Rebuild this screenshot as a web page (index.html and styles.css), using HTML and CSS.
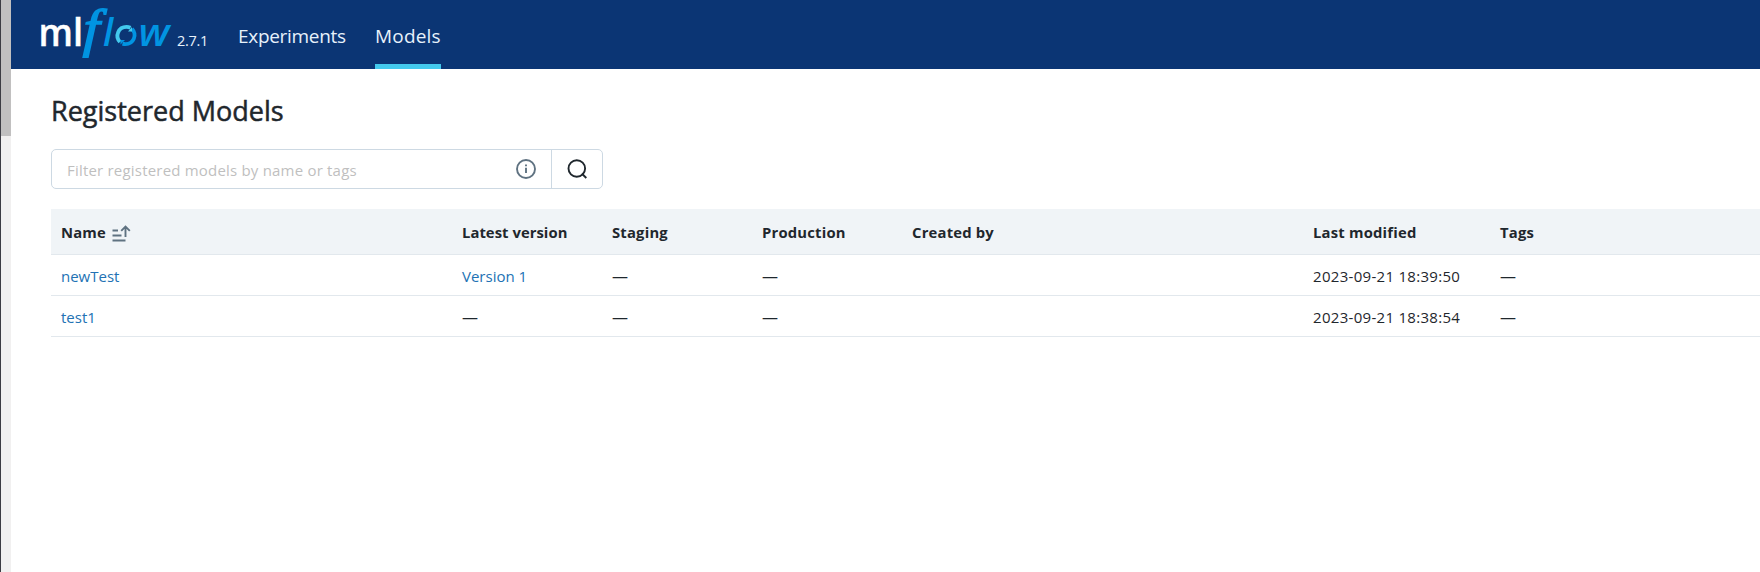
FILE: index.html
```
<!DOCTYPE html>
<html lang="en">
<head>
<meta charset="utf-8">
<title>Registered Models</title>
<link rel="stylesheet" href="styles.css">
</head>
<body>
<div class="scrollbar"><div class="thumb"></div></div>
<div class="page">
<header class="header">
  <svg class="logo" width="136" height="62" viewBox="0 0 136 62">
    <text class="logo-ml" x="-2.500" y="46" textLength="44.500" lengthAdjust="spacingAndGlyphs">ml</text>
    <text class="logo-f" transform="translate(42 46.300) skewX(-2) scale(1.080 1)">f</text>
    <text class="logo-flow" x="62" y="46">l</text>
    <g fill="none" stroke-width="3.800">
      <path stroke="#43c9ed" d="M79 42C73.500 36 77.500 26.900 85.500 26.900C87 26.900 88.200 27.200 89.500 27.800"/>
      <path stroke="#0194e2" d="M91 28.800C96.500 35 92.500 44.100 84.500 44.100C83.500 44.100 82.500 43.900 81.500 43.600"/>
    </g>
    <path fill="#43c9ed" d="M87 31.500H91V27Z"/>
    <path fill="#0194e2" d="M84 40H79.500V44.500Z"/>
    <text class="logo-flow" x="97.500" y="46" textLength="31" lengthAdjust="spacingAndGlyphs">w</text>
  </svg>
  <span class="version">2.7.1</span>
  <nav class="nav"><a class="tab exp">Experiments</a><a class="tab active">Models</a></nav>
</header>
<main class="content">
  <h1 class="title">Registered Models</h1>
  <div class="search">
    <div class="field"><span class="placeholder">Filter registered models by name or tags</span>
      <svg width="20" height="20" viewBox="0 0 20 20" fill="none" stroke="#5f7281" stroke-width="1.900"><circle cx="10" cy="10" r="9"/><path d="M10 8.700V14M10 5.600V7.300"/></svg>
    </div>
    <div class="button"><svg width="20" height="20" viewBox="0 0 20 20" fill="none" stroke="#1f272d" stroke-width="1.900"><circle cx="9.800" cy="9.500" r="8.300"/><path d="M14.800 14.500L19.300 19"/></svg></div>
  </div>
  <div class="table">
    <div class="row head">
      <div class="name-head">Name <svg width="19" height="17" viewBox="0 0 19 17" fill="none" stroke="#5f7281" stroke-width="1.900"><path d="M0.500 5.500H6M0.500 10.500H9.500M0.500 15.500H13.500M13.500 12V1.500M9.200 5.800L13.500 1.500L17.800 5.800"/></svg></div>
      <div class="latest">Latest version</div><div>Staging</div><div>Production</div><div>Created by</div><div>Last modified</div><div>Tags</div>
    </div>
    <div class="row">
      <div><a class="link">newTest</a></div><div><a class="link">Version 1</a></div><div><span class="dash">—</span></div><div><span class="dash">—</span></div><div></div><div class="date">2023-09-21 18:39:50</div><div><span class="dash">—</span></div>
    </div>
    <div class="row">
      <div><a class="link">test1</a></div><div><span class="dash">—</span></div><div><span class="dash">—</span></div><div><span class="dash">—</span></div><div></div><div class="date">2023-09-21 18:38:54</div><div><span class="dash">—</span></div>
    </div>
  </div>
</main>
</div>
</body>
</html>
```
FILE: styles.css
```
* { box-sizing: border-box; }
body { margin: 0; height: 572px; display: flex; overflow: hidden; background: #fff; color: #1f272d; font: 15px/20px "Open Sans", "Noto Sans", sans-serif; }
.scrollbar { width: 11px; flex: none; border-left: 1px solid #3c3c43; background: #f1f0f0; }
.thumb { height: 136px; background: #c1c0c0; }
.page { flex: 1; min-width: 0; }
.header { height: 69px; background: #0b3574; display: flex; padding-left: 30px; color: #e7f1fb; }
.logo { flex: none; overflow: visible; }
.logo-ml { font: 600 37px "Open Sans", sans-serif; fill: #fff; stroke: #fff; stroke-width: 0.4px; }
.logo-f { font: italic 53px "Liberation Serif", serif; fill: #0194e2; stroke: #0194e2; stroke-width: 1.6px; }
.logo-flow { font: italic 600 37px "Open Sans", sans-serif; fill: #0194e2; }
.version { width: 61px; padding-top: 31px; font-size: 14.5px; letter-spacing: -0.3px; }
.nav { display: flex; gap: 30px; }
.tab { height: 69px; padding-top: 24px; font-size: 19px; line-height: 24px; width: 66px; letter-spacing: 0.2px; white-space: nowrap; }
.exp { width: 107px; letter-spacing: -0.3px; }
.active { border-bottom: 5px solid #43c9ed; }
.content { padding: 26px 0 0 40px; }
.title { margin: 0; font-size: 27px; line-height: 32px; font-weight: 500; height: 54px; -webkit-text-stroke: 0.5px #1f272d; }
.search { display: flex; width: 552px; height: 40px; border: 1px solid #cdd9e3; border-radius: 5px; margin-bottom: 20px; }
.field { width: 499px; display: flex; align-items: center; justify-content: space-between; padding: 0 15px; }
.placeholder { color: #bfbfbf; padding-top: 2px; letter-spacing: 0.2px; }
.button { flex: 1; border-left: 1px solid #cdd9e3; display: flex; align-items: center; justify-content: center; }
.row { display: grid; grid-template-columns: 401px 150px 150px 150px 401px 187px 1fr; height: 41px; border-bottom: 1px solid #e2e8ed; align-items: center; }
.row > div { padding: 2px 0 0 10px; white-space: nowrap; }
.row.head { height: 46px; background: #f0f4f7; font-weight: 700; font-size: 14.8px; letter-spacing: 0.2px; }
.row.head > div { padding-top: 0; }
.row.head > .latest { letter-spacing: 0.05px; }
.row > .name-head { display: flex; align-items: center; gap: 6px; }
.name-head svg { margin-top: 3px; }
.link { color: #2272b4; }
.dash { font-size: 16px; }
.row > .date { letter-spacing: 0.3px; }
```
